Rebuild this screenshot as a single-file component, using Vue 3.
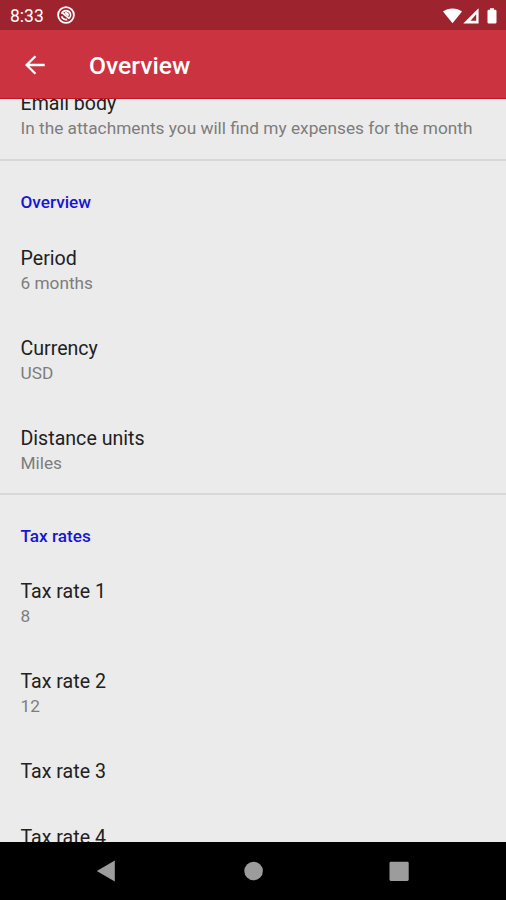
<script setup>
const sections = [
  {
    rows: [
      { title: 'Email body', summary: 'In the attachments you will find my expenses for the month' },
    ],
  },
  {
    heading: 'Overview',
    rows: [
      { title: 'Period', summary: '6 months' },
      { title: 'Currency', summary: 'USD' },
      { title: 'Distance units', summary: 'Miles' },
    ],
  },
  {
    heading: 'Tax rates',
    rows: [
      { title: 'Tax rate 1', summary: '8' },
      { title: 'Tax rate 2', summary: '12' },
      { title: 'Tax rate 3' },
      { title: 'Tax rate 4' },
    ],
  },
]
</script>

<template>
  <div class="screen">
    <header class="status">
      <span class="clock">8:33</span>
      <svg class="notify" width="20" height="20" viewBox="0 0 20 20" fill="none" stroke="#fff">
        <circle cx="10" cy="10" r="7.9" stroke-width="1.8" />
        <path d="M5.6 8.8a4.7 4.7 0 0 1 8.9 0a4.7 4.7 0 0 1-1.2 4.6" stroke-width="1.6" />
        <path d="M6 7.6l7.3 6M5.6 11.4a4.7 4.7 0 0 0 5.6 3" stroke-width="1.7" />
        <path d="M8.2 8.2a2.5 2.5 0 0 1 4 3.2z" fill="#fff" stroke="none" />
      </svg>
      <svg class="system" width="56" height="20" viewBox="0 0 56 20" fill="#fff">
        <path d="M0 5.6C5.2 1.4 13.8 1.4 19 5.6L9.5 17.2z" />
        <path fill-rule="evenodd" d="M35.6 2.2V17.5H20.3zM33.2 8.2L27.5 14.8H33.2z" />
        <path d="M47 2.2h4v1.6h1.2q1.3 0 1.3 1.3v11.1q0 1.3-1.3 1.3h-6.4q-1.3 0-1.3-1.3V5.1q0-1.3 1.3-1.3H47z" />
      </svg>
    </header>

    <div class="appbar">
      <svg class="back" width="20" height="20" viewBox="0 0 20 20" fill="none" stroke="#fff" stroke-width="2.3">
        <path d="M19.7 10H2M10.4 1.2L1.6 10l8.8 8.8" />
      </svg>
      <h1>Overview</h1>
    </div>

    <main class="content">
      <section v-for="(section, i) in sections" :key="i" class="section">
        <h2 v-if="section.heading">{{ section.heading }}</h2>
        <div v-for="row in section.rows" :key="row.title" class="row" :class="{ single: !row.summary }">
          <div class="title">{{ row.title }}</div>
          <div v-if="row.summary" class="summary">{{ row.summary }}</div>
        </div>
      </section>
    </main>

    <nav class="navbar">
      <svg width="506" height="58" viewBox="0 0 506 58" fill="#9c9c9c">
        <path d="M96.8 29L114.8 18.5V39.5z" />
        <circle cx="253.6" cy="29" r="9.3" />
        <rect x="389.5" y="19.7" width="19.2" height="19.2" rx="1.4" />
      </svg>
    </nav>
  </div>
</template>

<style>
body {
  margin: 0;
}
</style>

<style scoped>
.screen {
  width: 506px;
  height: 900px;
  display: flex;
  flex-direction: column;
  overflow: hidden;
  background: #ebebeb;
  font-family: Roboto, "Liberation Sans", sans-serif;
}
.status {
  flex: none;
  height: 30px;
  box-sizing: border-box;
  padding: 0 7px 0 10px;
  display: flex;
  align-items: center;
  background: #9d242e;
  color: #fff;
}
.clock {
  font-size: 17.5px;
  line-height: 20px;
  padding-top: 2px;
  width: 46px;
}
.system {
  margin-left: auto;
  margin-top: 1px;
}
.appbar {
  flex: none;
  height: 69px;
  box-sizing: border-box;
  padding: 2px 0 0 25px;
  display: flex;
  align-items: center;
  background: #cb3340;
  border-bottom: 1px solid #bd1622;
  color: #fff;
}
.back {
  margin-right: 44px;
}
h1 {
  margin: 0;
  padding-top: 2px;
  font-size: 24.7px;
  line-height: 30px;
  font-weight: 500;
}
.content {
  flex: 1;
  min-height: 0;
  overflow: hidden;
}
.section {
  border-bottom: 2px solid #d8d8d8;
}
.section:first-child {
  margin-top: -27px;
}
h2 {
  margin: 0;
  height: 66px;
  box-sizing: border-box;
  padding: 30px 20.5px 0;
  font-size: 17.2px;
  line-height: 22px;
  font-weight: 500;
  color: #1616d6;
}
.section:last-child h2 {
  height: 65px;
}
.row {
  height: 90px;
  box-sizing: border-box;
  padding: 20px 20.5px 0;
}
.row:last-child {
  height: 86px;
}
.section:first-child .row {
  height: 87px;
}
.row.single {
  height: 66px;
}
.title {
  font-size: 19.6px;
  line-height: 23px;
  color: #212121;
}
.summary {
  font-size: 17.25px;
  line-height: 21px;
  margin-top: 3px;
  color: #7d7d7d;
  white-space: nowrap;
}
.navbar {
  flex: none;
  height: 58px;
  background: #000;
}
.navbar svg {
  display: block;
}
</style>
